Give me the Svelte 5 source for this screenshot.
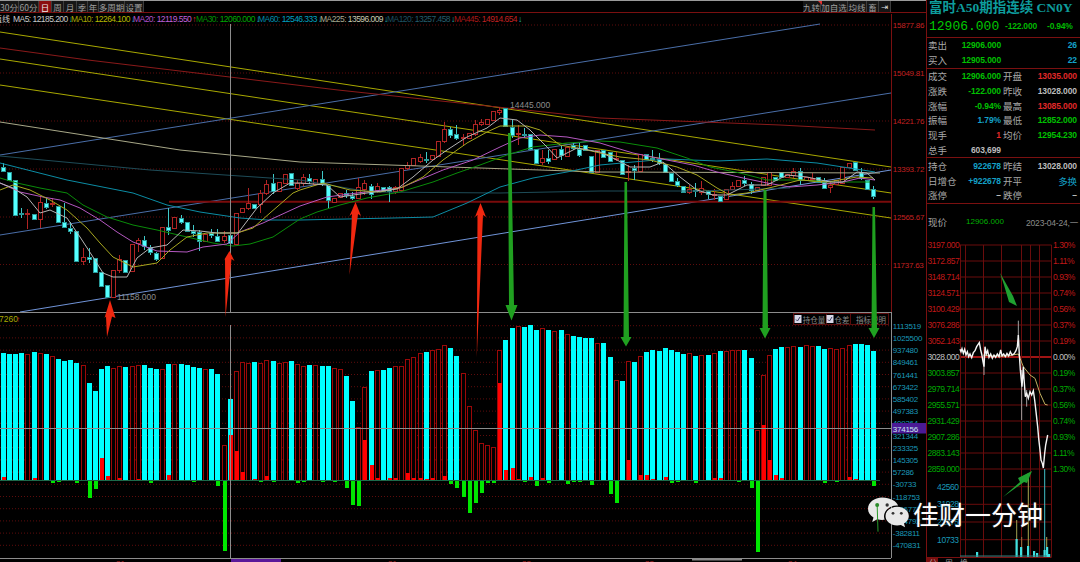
<script>
  // toolbar tabs: text + width
  const leftTabs = [
    ['30分', 19], ['60分', 20], ['日', 13, true], ['周', 12], ['月', 13], ['季', 11],
    ['年', 11], ['多周期', 26], ['设置', 19]
  ]
  const rightTabs = [['九转', 18], ['加自选', 27], ['均线', 19], ['畜', 12]]

  const legend = [
    ['MA5: 12185.200', '↓', '#c8c8c8', '#c8c8c8', 58],
    ['MA10: 12264.100', '↓', '#a8a800', '#b8b800', 62],
    ['MA20: 12119.550', '↑', '#b050c8', '#c060d8', 63],
    ['MA30: 12060.000', '↓', '#009000', '#00a800', 62],
    ['MA60: 12546.333', '↓', '#0088a8', '#00a0c0', 62],
    ['MA225: 13596.009', '↓', '#a8a890', '#c8c8b0', 67],
    ['MA120: 13257.458', '↓', '#1e5060', '#245c6c', 67],
    ['MA445: 14914.654', '↓', '#a81818', '#c02020', 64]
  ]

  // volume panel bars: [top in 3x zoom units, c(yan)/r(ed), sub]
  // sub < 511 is the red open-interest block, sub > 511 the green one below the baseline
  const bars = [
    [129,'c',501],[131,'c'],[132,'c'],[129,'c'],[132,'r',514],[127,'c',503],[130,'r'],[131,'c'],[138,'r',518],[147,'c',517],
    [153,'c',514],[151,'c'],[158,'c',518],[166,'r',514],[219,'c',564],[243,'c',537],[178,'c',444],[167,'c',499],[173,'r',514],[168,'r',505],
    [171,'c',514],[168,'r'],[166,'r',508],[165,'c'],[175,'c',518],[178,'c',514],[178,'r'],[162,'c',496],[163,'r'],[162,'c'],
    [165,'c'],[171,'c',515],[173,'c'],[178,'r',514],[177,'c'],[193,'c',527],[406,'r',722],[268,'c',375],[182,'r',423],[156,'r',485],
    [160,'r',514],[156,'c',508],[160,'r',515],[151,'r',499],[154,'c',515],[158,'r',514],[157,'r'],[153,'c'],[163,'r',520],
    [168,'r',515],[165,'c'],[166,'r'],[169,'c',515],[169,'c'],[173,'r',515],[178,'r'],[198,'c',534],[273,'c',584],[350,'r',587],
    [231,'r',390],[184,'c',465],[181,'r',505],[180,'c'],[175,'c',505],[169,'r',505],[168,'r'],[148,'r',490],[140,'r',503],[130,'r',503],
    [126,'c',508],[120,'r',503],[118,'r'],[106,'r',498],[115,'c',523],[139,'c',534],[190,'r',560],[289,'r',610],[359,'r',578],[399,'r',548],
    [404,'r',518],[412,'r',518],[121,'r',219],[90,'c',481],[53,'c',474],[49,'r',508],[52,'c',515],[46,'c',501],[61,'c',527],[54,'r',505],
    [61,'c',518],[64,'r'],[61,'c'],[73,'r',521],[77,'c',515],[81,'c',515],[85,'c'],[83,'c',525],[100,'r',514],
    [99,'c'],[140,'c',551],[211,'r',580],[212,'c'],[154,'r',450],[157,'c',514],[139,'r',495],[125,'c',495],[121,'c',508],[123,'c'],
    [114,'c',502],[120,'c',518],[125,'c',516],[131,'c',514],[130,'r'],[138,'c',518],[136,'r'],[136,'c'],[130,'r',504],[124,'c',505],
    [122,'r'],[121,'r'],[121,'r',515],[121,'c'],[144,'c',533],[360,'r',726],[196,'r',346],[135,'r',450],[118,'c',495],[112,'c',505],
    [111,'r'],[109,'r'],[110,'c'],[106,'r'],[109,'r'],[109,'c'],[116,'c',518],[114,'r'],[118,'r',515],[115,'r'],
    [106,'r',500],[103,'c',508],[103,'c'],[105,'c'],[123,'c',529]
  ]

  // candles: [body top, body bottom, wick top, wick bottom]
  const candles = [
    [166.7,170.7,163,172],[171.7,180],[180,215],[213,214,208,218],[213,214,209,229],[214,219.3],[201.7,219,197,228],[202.7,206.7,198,209],[203,204,198,207],[206,221.7],
    [222,227.3,203,228],[227.7,231,222,234],[231,261],[257.3,261,248,265],[257.3,259,248,263],[258.3,272.7],[271.7,285.7],[285,297],[270,296.7],[259.3,270,255,273],
    [260,271.7],[244.3,271.7],[240,243.3,238,252],[240,246,236,250],[246.7,252,245,255],[252.7,258.3,252,261],[227.3,258.3],[227.3,230,208,235],[217.3,228.7],[218,221.7,215,224],
    [221.7,231],[231,233,225,237],[231.7,240.7,230,251],[234,241.3],[232.7,235,229,238],[236,240.7,229,242],[235.7,239.3,231,243],[235,243.3],[212.7,244],[208.3,212.7],
    [203.3,208.3,188,210],[204,207.7],[193.3,204,190,213],[184,192.7,180,195],[183.3,191.7,174,194],[182,190.7],[174,183.3],[173.3,185.3],[183.3,188,180,190],
    [177.3,183.3,174,186],[177.7,181,174,184],[179.3,184],[179.3,184,171,186],[185,200,184,208],[198.3,202.7],[193.3,197.3],[193.3,195.3,190,198],[195.7,197.7,192,200],[186.7,197.3,178,198],
    [183.3,189.3,180,195],[185.7,193.3,184,199],[186,190,183,193],[186.7,190.7],[186.7,190.7,186,202],[186.7,190.7,186,194],[168.3,190],[165,168.3,162,170],[158.3,165.3],[156.7,160.7,154,163],
    [159,160,152,163],[155,159.3],[140.7,156],[129,141,122,143],[129.3,135,127,138],[134,137.7,125,140],[136.7,138,134,146],[133.3,138.3],[124,134.3,120,136],[121.7,123.3,119,126],
    [119.3,124],[110.7,120],[110,111.7,107,115],[108.3,126.7],[126.7,135,120,138],[133.3,134.7,125,145],[134,135,128,138],[134.3,149.3],[149.3,163.3],[158.3,162.7,150,165],
    [158.3,161,150,164],[149.3,159],[149.3,155.7,146,160],[146.7,155.7],[145,147.7,143,150],[149,155,143,157],[145,150],[156,171.7],[150,172],
    [150,156.7],[151.7,161],[158,159,152,161],[160,174.3],[170.7,172,165,181],[168.3,170.7,165,180],[154,170.7],[154,159],[158,159,150,162],[159.3,163.3,153,165],
    [164.3,172.7],[172.7,181],[181,185,178,187],[186,192.3],[189.3,192.7,185,194],[190,191,183,197],[188.3,192.3,181,195],[191,194.3,190,199],[194,195,189,200],[195.7,201],
    [189.3,199],[186,188.7,182,190],[180,186],[180,183.3,176,186],[184,190,182,194],[186.7,189.3],[176.7,185],[171.7,185],[176.7,180],[172.3,177.7],
    [174,177.3],[170.7,175,168,178],[171,180,168,185],[176.7,180],[178,179,173,181],[176.7,181.7],[181.7,187.3,178,189],[184.5,186,181,193],[180,184.3],[167.3,183.3],
    [162.7,166.7],[162.3,170.7],[172,178.3,168,180],[180,189],[189,195.7,186,199]
  ]

  // snap to whole pixels, the terminal draws on a pixel grid
  const barX = (i) => Math.round(0.9 + 6.128 * i)
  const zy = (z) => Math.round(310 + z / 3)

  const trend = [
    [0, 32, 891, 167, '#a8a800'], [0, 59, 891, 193, '#a8a800'], [0, 85, 891, 218, '#a8a800'],
    [0, 155, 820, 24, '#4a6ea8'], [0, 235, 891, 93, '#4a6ea8'], [20, 312, 891, 170, '#7094d8']
  ]

  const ma445 = '0,48 88,60 338,90 600,118 780,125 875,130'
  const ma225 = '0,122 180,150 300,162 600,172 880,173'
  const ma120 = '0,156 150,170 300,180 370,192 500,193 600,191 700,191 790,188'
  const ma60 = '0,163 67,180 133,193 167,205 200,212 240,218 267,220 300,220 393,218 433,217 467,203 500,187 533,178 567,172 600,165 633,162 667,159 717,161 767,159 817,163 875,172'
  const ma30 = '0,178 17,183 40,188 67,193 83,205 107,217 133,225 157,230 187,237 213,243 233,246 250,244 273,237 300,219 317,212 340,205 367,198 400,192 433,182 457,173 480,165 507,155 533,147 567,143 600,141 620,142 657,148 687,158 710,167 740,173 767,180 800,180 833,182 870,182'
  const ma20 = '0,183 20,192 43,197 60,200 80,208 100,220 117,232 133,242 157,251 187,252 203,247 227,244 240,232 263,223 300,206 327,197 357,193 400,188 443,170 473,160 500,147 520,138 540,135 567,137 600,143 613,147 633,153 667,160 693,165 717,172 743,178 767,183 790,187 817,185 843,182 860,178 875,180'
  const ma10 = '0,190 13,185 30,190 50,200 67,210 87,228 100,243 113,257 133,267 157,263 170,250 187,237 207,233 237,233 253,228 270,213 293,193 300,190 323,183 350,190 380,192 403,187 423,177 443,160 467,143 487,132 500,126 527,126 540,130 560,145 587,150 600,153 620,157 650,160 677,167 697,175 717,188 730,195 747,193 773,187 800,180 827,182 857,177 873,178'
  const ma5 = '0,183 13,188 27,197 40,213 50,210 67,218 80,237 93,257 103,273 113,277 127,277 137,258 150,248 167,245 183,230 200,231 217,233 238,233 257,208 273,193 290,183 300,183 327,185 340,197 367,193 397,189 413,177 433,160 447,150 467,137 487,128 500,118 517,120 530,130 547,147 557,158 577,148 600,152 617,160 630,167 650,167 663,162 680,177 697,190 713,195 727,195 747,185 767,185 787,175 807,177 830,182 843,182 857,172 867,173 875,180'

  const priceAxis = [['15877.86', 25], ['15049.81', 73], ['14221.76', 121], ['13393.72', 169], ['12565.67', 217], ['11737.63', 264.5]]
  const volAxis = ['1113519','1025500','937480','849461','761441','673422','585402','497383','409364','321344','233325','145305','57286','-30733','-118753','-206772','-294792','-382811','-470831']

  const redArrows = [
    '110,300 115.5,318 112,316.5 107,337 106,316.5 104.5,318',
    '229.5,251 234.5,261 231.5,259 225.5,317 225,259 223.5,261',
    '355.5,202 361,216 358,214 349.5,275 352,214 349.5,216',
    '480.5,203 486,217 483,215 476.8,357 477.5,215 475,217'
  ]
  const greenArrows = [
    '508,133 511,133 514,305 517.5,305 511.5,320.5 505.5,305 509,305',
    '624.500,182 627,182 629,337 631.5,337 626,346.5 620.5,337 623.5,337',
    '763.5,190 766.5,190 768,328 770.5,328 765,338.5 759.5,328 762.5,328',
    '872.5,207 875,207 877,328 879.5,328 874,338 868.5,328 871.5,328'
  ]
  const dates = [[116, '21'], [388, '21'], [522, '22'], [645, '23'], [788, '24']]

  // quote panel
  const quote1 = [['卖出', '12906.000', '26'], ['买入', '12905.000', '22']]
  const quote2 = [
    ['成交', '12906.000', 'g', '开盘', '13035.000', 'r'],
    ['涨跌', '-122.000', 'g', '昨收', '13028.000', 'w'],
    ['涨幅', '-0.94%', 'g', '最高', '13085.000', 'r'],
    ['振幅', '1.79%', 'b', '最低', '12852.000', 'g'],
    ['现手', '1', 'r', '均价', '12954.230', 'g'],
    ['总手', '603,699', 'w', '', '', 'w']
  ]
  const quote3 = [
    ['持仓', '922678', 'b', '昨结', '13028.000', 'w'],
    ['日增仓', '+922678', 'b', '开平', '多换', 'b'],
    ['涨停', '–', 'w', '跌停', '–', 'w']
  ]

  // minute chart
  const mPrices = ['3197.000','3172.857','3148.714','3124.571','3100.429','3076.286','3052.143','3028.000','3003.857','2979.714','2955.571','2931.429','2907.286','2883.143','2859.000']
  const mPct = ['1.30%','1.11%','0.93%','0.74%','0.56%','0.37%','0.19%','0.00%','0.19%','0.37%','0.56%','0.74%','0.93%','1.11%','1.30%']
  const mVols = [[486.7, '42560'], [504.3, '31928'], [522, '21375'], [539.7, '10733']]
  const mLine = [[240,358],[243,365],[246,356],[250,370],[254,358],[258,375],[262,365],[266,380],[270,372],[275,383],[280,368],[285,362],[290,350],[298,338],[302,360],[305,372],[309,395],[312,410],[315,350],[319,372],[323,362],[327,382],[332,372],[337,385],[342,375],[347,382],[352,372],[357,380],[362,360],[366,378],[371,372],[376,380],[381,370],[386,378],[391,365],[396,375],[402,372],[408,362],[412,350],[415,315],[418,375],[421,420],[426,470],[430,410],[432,445],[436,500],[440,490],[445,505],[450,485],[455,495],[460,482],[464,510],[468,545],[473,590],[476,625],[480,660],[483,690],[487,700],[490,714],[494,670],[497,645],[503,615]]
  const mAvg = [[310,375],[330,378],[380,378],[415,372],[430,410],[450,435],[465,445],[480,490],[495,523],[503,525]]
  const mSpikes = [[415,272,320],[425,420,570],[312,375,435],[440,480,530]]
  const toPts = (arr) => arr.map(([x, y]) => `${880 + x / 3},${230 + y / 3}`).join(' ')
  const mTicks = [[977, 10], [1016.5, 36], [1021, 20], [1028, 22], [1034, 12], [1037, 8], [1044.5, 14], [1047, 20], [1049, 6]]
</script>

<div class="screen">
  <div class="left">
    <div class="toolbar">
      {#each leftTabs as [label, w, on]}
        <span class="tab" class:on style="width:{w}px">{label}</span>
      {/each}
      <span class="spacer"></span>
      {#each rightTabs as [label, w]}
        <span class="tab" style="width:{w}px">{label}</span>
      {/each}
      <span class="tab pin" style="width:12px">⇥</span>
      <i class="flag"></i>
    </div>

    <div class="legend">
      <span class="legend-head">值线</span>
      {#each legend as [text, dir, c1, c2, w]}
        <span class="legend-item" style="width:{w}px;color:{c2}">
          <span style="color:{c1}">{text.split(' ')[0]}</span> {text.split(' ')[1]}<b class={dir === '↑' ? 'up' : 'down'}>{dir}</b>
        </span>
      {/each}
    </div>

    <svg class="chart" width="926" height="538" viewBox="0 24 926 538">
      <!-- price grid -->
      {#each priceAxis as [label, y]}
        <line class="grid" x1="0" x2="891" y1={y} y2={y} />
        <text class="axis" x="892.8" y={y + 3}>{label}</text>
      {/each}
      {#each volAxis as label, i}
        <line class="grid" x1="0" x2="891" y1={325.7 + i * 12.2} y2={325.7 + i * 12.2} />
        <text class="axis vol" x="892.8" y={328.8 + i * 12.2}>{label}</text>
      {/each}

      <!-- trend lines -->
      {#each trend as [x1, y1, x2, y2, c]}
        <line {x1} {y1} {x2} {y2} stroke={c} stroke-width="1" />
      {/each}
      <polyline points={ma445} class="ma" stroke="#8a1a1a" />
      <line x1="169" x2="891" y1="201.7" y2="201.7" stroke="#7a0b0b" stroke-width="2" />

      <!-- candles -->
      {#each candles as c, i}
        {@const up = bars[i][1] === 'r'}
        {@const x = barX(i)}
        {@const top = Math.round(c[0]) + 0.5}
        <line class="crisp" x1={x + 2.5} x2={x + 2.5} y1={c[2] ?? c[0]} y2={c[3] ?? c[1]} stroke={up ? '#b02424' : '#3fc8c8'} />
        <rect class="crisp" x={x + 0.5} y={top} width="4" height={Math.max(1, Math.round(c[1] - c[0]))} fill={up ? '#000' : '#55ffff'} stroke={up ? '#b02424' : '#2a9a9a'} stroke-width="1" />
      {/each}

      <polyline points={ma225} class="ma" stroke="#a8a888" />
      <polyline points={ma120} class="ma" stroke="#1e4c58" />
      <polyline points={ma60} class="ma" stroke="#0c8ca4" />
      <polyline points={ma30} class="ma" stroke="#0a8c0a" />
      <polyline points={ma20} class="ma" stroke="#b458c0" />
      <polyline points={ma10} class="ma" stroke="#a8a820" />
      <polyline points={ma5} class="ma" stroke="#b4b4b4" />

      <text class="extreme" x="510" y="108">14445.000</text>
      <text class="extreme" x="117" y="300">11158.000</text>

      <!-- volume / open interest bars -->
      {#each bars as [top, kind, sub], i}
        {@const x = barX(i)}
        {@const y = zy(top)}
        {#if kind === 'c'}
          <rect class="crisp" {x} {y} width="5" height={480 - y} fill="#00ffff" />
        {:else}
          <rect class="crisp" x={x + 0.5} y={y + 0.5} width="4" height={480 - y} fill="#000" stroke="#9c0808" stroke-width="1" />
        {/if}
        {#if sub && sub < 511}
          <rect class="crisp" x={x + 1} y={zy(sub)} width="4" height={480 - zy(sub)} fill="#ff0000" />
        {:else if sub}
          <rect class="crisp" x={x + 1} y="481" width="4" height={zy(sub) - 481} fill="#00e600" />
        {/if}
      {/each}
      <line x1="0" x2="880" y1="480.5" y2="480.5" stroke="#1c6a4a" />

      <!-- indicator header -->
      <text class="ind" x="-1" y="322">7260</text>
      <text class="ind-up" x="16" y="322">↑</text>
      <g class="checks">
        <rect class="check-box" x="793.5" y="313.5" width="33" height="11" />
        <rect class="check-box" x="826.5" y="313.5" width="24" height="11" />
        <rect class="check-box" x="850.5" y="313.5" width="38" height="11" />
        <rect x="794.5" y="315" width="7" height="8" fill="#d8d8e8" />
        <path d="M796 319.500l1.500 1.500 2.500-4" fill="none" stroke="#446" />
        <rect x="826.5" y="315" width="7" height="8" fill="#d8d8e8" />
        <path d="M828 319.500l1.500 1.500 2.500-4" fill="none" stroke="#446" />
        <text class="check-text" x="802.8" y="322.5">持仓量</text>
        <text class="check-text" x="834.5" y="322.5">仓差</text>
        <text class="check-text" x="856" y="322.5">指标说明</text>
      </g>

      <!-- crosshair and frame -->
      <line class="cross" x1="230.5" x2="230.5" y1="24" y2="313" />
      <line class="cross" x1="230.5" x2="230.5" y1="325" y2="558" />
      <line class="cross" x1="0" x2="891" y1="312.5" y2="312.5" />
      <line class="cross" x1="0" x2="891" y1="428.5" y2="428.5" />
      <line class="cross" x1="0" x2="891" y1="558.5" y2="558.5" />
      <line x1="891.5" x2="891.5" y1="14" y2="312" stroke="#7a1010" />
      <line class="cross" x1="891.5" x2="891.5" y1="312" y2="558" />
      <rect x="892" y="423" width="34" height="10.5" fill="#4b1a96" />
      <text class="axis cur" x="892.8" y="431.5">374156</text>

      <rect x="231" y="559" width="50" height="4" fill="#5a189a" />
      {#each dates as [x, d]}
        <text class="date" {x} y="566">{d}</text>
      {/each}
      <rect x="692" y="558.5" width="50" height="2" fill="#8a8a8a" />

      <!-- hand drawn arrows -->
      {#each redArrows as pts}<polygon points={pts} fill="#f02810" />{/each}
      {#each greenArrows as pts}<polygon points={pts} fill="#20a020" />{/each}
    </svg>
  </div>

  <aside class="panel">
    <div class="head">
      <div class="title">富时A50期指连续 CN0Y</div>
      <div class="price">
        <span class="big">12906.000</span><span class="chg">-122.000</span><span class="chg pct">-0.94%</span>
      </div>
    </div>

    <div class="sec">
      {#each quote1 as [a, b, c]}
        <div class="row">
          <span class="lab">{a}</span><span class="val g left-val">{b}</span><span class="val b end">{c}</span>
        </div>
      {/each}
    </div>

    <div class="sec">
      {#each quote2 as [a, b, bc, c, d, dc]}
        <div class="row">
          <span class="lab">{a}</span><span class="val {bc} mid">{b}</span><span class="lab">{c}</span><span class="val {dc} end">{d}</span>
        </div>
      {/each}
    </div>

    <div class="sec">
      {#each quote3 as [a, b, bc, c, d, dc]}
        <div class="row">
          <span class="lab">{a}</span><span class="val {bc} mid">{b}</span><span class="lab">{c}</span><span class="val {dc} end" class:cjk={d === '多换'}>{d}</span>
        </div>
      {/each}
    </div>

    <div class="now">
      <span class="lab">现价</span><span class="now-val">12906.000</span><span class="now-date">2023-04-24,一</span>
    </div>

    <svg class="minute" width="153" height="322" viewBox="927 240 153 322">
      {#each mPrices as label, i}
        {@const y = 245 + i * 16}
        <line x1="960" x2="1051.5" y1={y} y2={y} stroke={i === 7 ? '#a01414' : '#6a0c0c'} stroke-width={i === 7 ? 2 : 1} />
        <text class="m-axis" class:mid-tone={i === 7} class:down-tone={i > 7} x="927.5" y={y + 3}>{label}</text>
        <text class="m-axis" class:mid-tone={i === 7} class:down-tone={i > 7} x="1053" y={y + 3}>{mPct[i]}</text>
      {/each}
      {#each [960.5, 965.5, 983.5, 1001.5, 1021.5, 1030.5, 1039.5, 1051.5] as x}
        <line x1={x} x2={x} y1="245" y2="557" stroke="#6a0c0c" />
      {/each}
      {#each mVols as [y, label]}
        <line x1="960" x2="1051.5" y1={y} y2={y} stroke="#6a0c0c" />
        <text class="m-axis vol" x="958.5" y={y + 3} text-anchor="end">{label}</text>
      {/each}
      <line x1="960" x2="1051.5" y1="557" y2="557" stroke="#6a0c0c" />
      <line x1="927" x2="1051.5" y1="557.5" y2="557.5" stroke="#7a1010" />

      <polyline points={toPts(mAvg)} class="ma" stroke="#c0b060" />
      {#each mSpikes as [x, a, b]}
        <line x1={880 + x / 3} x2={880 + x / 3} y1={230 + a / 3} y2={230 + b / 3} stroke="#a0a0a0" />
      {/each}
      <polyline points={toPts(mLine)} class="m-line" />

      <!-- volume spikes -->
      <line x1="1016.7" x2="1016.7" y1="520" y2="557" stroke="#a0a050" />
      <line x1="1021.7" x2="1021.7" y1="537" y2="557" stroke="#a07040" />
      <line x1="1028.3" x2="1028.3" y1="473" y2="557" stroke="#a8a850" />
      <line x1="1044.7" x2="1044.7" y1="469" y2="557" stroke="#40c0c8" />
      <line x1="1046.7" x2="1046.7" y1="537" y2="557" stroke="#a8a850" />
      {#each mTicks as [x, h]}
        <rect x={x - 1} y={557 - h / 2} width="2.2" height={h / 2} fill="#40e0e0" />
      {/each}
      <line x1="960" x2="1047" y1="556" y2="556" stroke="#308080" />

      <polygon points="1000,273 1004,280 1013,296 1017,306 1009,302 1004,285" fill="#20a030" />
      <polygon points="1003,497 1020,482 1018,478 1032,471 1027,483 1024,482" fill="#20a030" />

      <rect x="927" y="558" width="11" height="4" fill="#7a0c0c" />
      <text class="m-tab" x="929" y="566">分</text>
      <text class="m-tab" x="945" y="566">周</text>
      <text class="m-tab" x="960" y="566">换</text>
    </svg>
  </aside>

  <div class="mark">
    <svg class="wechat" width="42" height="40" viewBox="0 0 50 48">
      <path d="M18 3C8.600 3 1 9 1 16.500c0 4.400 2.600 8.200 6.600 10.600L6 32.500l6.200-3.300c1.900.5 3.800.8 5.800.8 1 0 2-.1 3-.2-.5-1.300-.8-2.700-.8-4.200 0-7.200 6.900-13 15.400-13 .5 0 1 0 1.500.1C35.400 7.500 27.400 3 18 3z" fill="#e8e8e8" />
      <path d="M36 14c-7.700 0-14 5-14 11.300s6.300 11.300 14 11.300c1.600 0 3.100-.2 4.500-.6l5 2.700-1.300-4.500c3.500-2.100 5.800-5.300 5.800-8.900C50 19 43.700 14 36 14z" fill="#e8e8e8" />
      <line x1="12" x2="13" y1="12" y2="44" stroke="#2a9a2a" stroke-width="1.200" />
      <circle cx="12" cy="12" r="2.400" fill="#2a8a2a" />
      <circle cx="24" cy="12" r="2" fill="#333" />
      <circle cx="31" cy="22" r="1.700" fill="#333" />
      <circle cx="41" cy="22" r="1.700" fill="#333" />
    </svg>
    <span class="mark-text">佳财一分钟</span>
  </div>
</div>

<style>
  :global(body) {
    background: #000;
  }
  .screen {
    position: relative;
    display: flex;
    width: 1080px;
    height: 562px;
    overflow: hidden;
    background: #000;
    font-family: "Liberation Sans", "Noto Sans CJK SC", sans-serif;
  }
  .left {
    display: flex;
    flex-direction: column;
    width: 926px;
    flex: none;
    border-top: 1px solid #9a9a9a;
    box-sizing: border-box;
  }
  .toolbar {
    position: relative;
    display: flex;
    height: 12px;
    padding-right: 35px;
    border-bottom: 1px solid #7a1010;
    box-sizing: border-box;
    font-family: "Noto Sans CJK SC", sans-serif;
  }
  .tab {
    display: flex;
    align-items: center;
    justify-content: center;
    box-sizing: border-box;
    height: 11px;
    background: #161616;
    border-right: 1px solid #3c3c3c;
    color: #9e9e9e;
    font-size: 8.500px;
    white-space: nowrap;
  }
  .tab.on {
    background: #8a0f0f;
    color: #eee;
  }
  .pin {
    color: #ddd;
    font-family: "DejaVu Sans", sans-serif;
  }
  .spacer {
    flex: 1;
  }
  .flag {
    position: absolute;
    left: 818px;
    top: 0;
    border-top: 4px solid #e03030;
    border-left: 4px solid transparent;
  }
  .legend {
    display: flex;
    align-items: center;
    height: 11px;
    font-size: 8.5px;
    letter-spacing: -0.55px;
    white-space: nowrap;
    overflow: hidden;
  }
  .legend-head {
    width: 13px;
    margin-left: -6px;
    padding-right: 6px;
    flex: none;
    color: #c8c8c8;
    font-family: "Noto Sans CJK SC", sans-serif;
    font-size: 8px;
    letter-spacing: 0;
    box-sizing: content-box;
  }
  .legend-item {
    flex: none;
  }
  .legend-item b {
    font-weight: 400;
    margin-left: 1px;
  }
  .down {
    color: #20c0c0;
  }
  .up {
    color: #e03030;
  }
  .chart {
    display: block;
    flex: none;
    overflow: visible;
  }
  .crisp {
    shape-rendering: crispEdges;
  }
  .grid {
    stroke: #5e0c0c;
    stroke-dasharray: 1 2;
  }
  .axis {
    fill: #c42020;
    font-size: 8px;
    letter-spacing: -0.25px;
  }
  .axis.vol {
    fill: #1a98b8;
  }
  .axis.cur {
    fill: #c8e8f0;
  }
  .ma {
    fill: none;
    stroke-width: 1;
  }
  .m-line {
    fill: none;
    stroke: #f4f4f4;
    stroke-width: 1.4;
  }
  .extreme {
    fill: #8c8c8c;
    font-size: 8.5px;
  }
  .ind {
    fill: #a8a800;
    font-size: 8.500px;
  }
  .ind-up {
    fill: #a82020;
    font-size: 8px;
  }
  .check-box {
    fill: none;
    stroke: #5a0c0c;
  }
  .check-text {
    fill: #8c8c8c;
    font-family: "Noto Sans CJK SC", sans-serif;
    font-size: 7.5px;
  }
  .cross {
    stroke: #8c8c8c;
  }
  .date {
    fill: #a82020;
    font-size: 8px;
  }
  .panel {
    flex: 1;
    display: flex;
    flex-direction: column;
    min-width: 0;
    border-left: 1px solid #7a1010;
  }
  .head {
    height: 37px;
    flex: none;
    padding-left: 2px;
    border-bottom: 1px solid #7a1010;
    box-sizing: content-box;
  }
  .title {
    margin-top: 0;
    height: 17px;
    line-height: 16px;
    color: #0e9c9c;
    font-family: "Liberation Serif", "Noto Sans CJK SC", serif;
    font-size: 13.5px;
    font-weight: 700;
    white-space: nowrap;
  }
  .price {
    display: flex;
    align-items: center;
    height: 18px;
    color: #00b800;
  }
  .big {
    width: 76px;
    color: #00c800;
    font-family: "Liberation Mono", monospace;
    font-size: 13px;
  }
  .chg {
    width: 42px;
    font-size: 8.500px;
    font-weight: 700;
    letter-spacing: -0.2px;
  }
  .pct {
    width: auto;
  }
  .sec {
    flex: none;
    padding: 0 3px 0 1px;
    border-bottom: 1px solid #7a1010;
  }
  .row {
    display: flex;
    align-items: center;
    height: 14.800px;
    white-space: nowrap;
  }
  .lab {
    flex: none;
    min-width: 19px;
    color: #a8a8a8;
    font-family: "Noto Sans CJK SC", sans-serif;
    font-size: 9.500px;
  }
  .val {
    font-size: 8.500px;
    font-weight: 700;
    letter-spacing: -0.1px;
    text-align: right;
  }
  .mid {
    flex: 1;
    margin-right: 2px;
  }
  .left-val {
    width: 54px;
    flex: none;
    text-align: right;
  }
  .end {
    width: 55px;
    flex: none;
  }
  .row > .left-val + .end {
    flex: 1;
  }
  .cjk {
    font-family: "Noto Sans CJK SC", sans-serif;
    font-size: 9.500px;
    font-weight: 400;
  }
  .g {
    color: #00c000;
  }
  .r {
    color: #e02828;
  }
  .w {
    color: #bcbcbc;
  }
  .b {
    color: #14a0c8;
  }
  .now {
    display: flex;
    align-items: center;
    height: 36.200px;
    padding: 0 2px 0 1px;
    flex: none;
  }
  .now-val {
    width: 48px;
    margin-left: 19px;
    color: #00b000;
    font-size: 8px;
  }
  .now-date {
    margin-left: auto;
    color: #8c8c8c;
    font-size: 8.500px;
    letter-spacing: -0.2px;
  }
  .minute {
    display: block;
    flex: none;
  }
  .m-axis {
    fill: #c01818;
    font-size: 8.500px;
    letter-spacing: -0.45px;
  }
  .m-axis.mid-tone {
    fill: #c0c0c0;
  }
  .m-axis.down-tone {
    fill: #00a800;
  }
  .m-axis.vol {
    fill: #1a98b8;
  }
  .m-tab {
    fill: #999;
    font-size: 8px;
    font-family: "Noto Sans CJK SC", sans-serif;
  }
  .mark {
    position: absolute;
    left: 867px;
    top: 495px;
    display: flex;
    align-items: center;
  }
  .wechat {
    display: block;
    flex: none;
    margin-right: 4px;
  }
  .mark-text {
    margin-top: -2px;
    color: #fff;
    font-family: "Noto Sans CJK SC", sans-serif;
    font-size: 26px;
    line-height: 34px;
    white-space: nowrap;
    text-shadow: 0 0 2px #333;
  }
</style>
